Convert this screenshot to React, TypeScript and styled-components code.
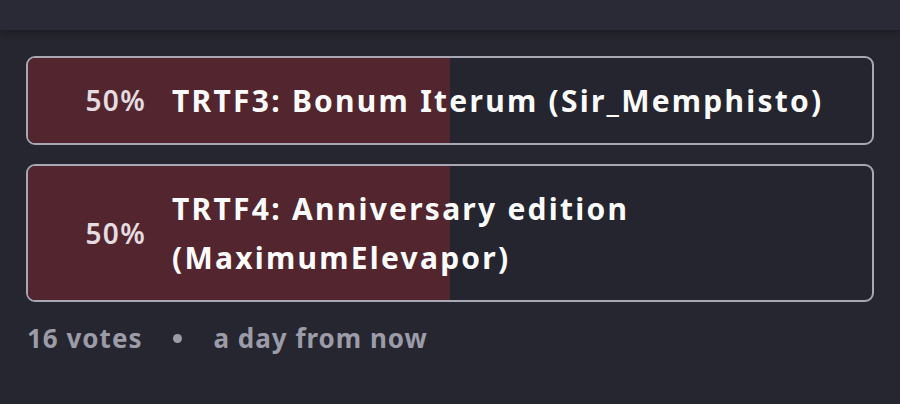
import React from "react";
import styled, { createGlobalStyle } from "styled-components";

const Global = createGlobalStyle`
  html, body { margin: 0; padding: 0; background: #262630; }
  body { font-family: "Noto Sans", "Open Sans", sans-serif; }
  #root { width: 900px; height: 404px; overflow: hidden; }
`;

const Page = styled.div`
  width: 900px;
  height: 404px;
  background: #262630;
  display: flex;
  flex-direction: column;
`;

const TopBar = styled.div`
  height: 30px;
  background: #292a35;
  box-shadow: 0 2px 8px rgba(0, 0, 0, 0.35);
  flex-shrink: 0;
`;

const Poll = styled.div`
  display: flex;
  flex-direction: column;
  gap: 19px;
  padding: 26px 26px 0 26px;
`;

const Option = styled.div`
  position: relative;
  border: 2px solid #a8a8b4;
  border-radius: 9px;
  background: #252530;
  overflow: hidden;
  display: flex;
  align-items: center;
  padding: 18px 24px 18px 52px;
`;

const Fill = styled.div`
  position: absolute;
  left: 0;
  top: 0;
  bottom: 0;
  background: #53262f;
`;

const Percent = styled.span`
  position: relative;
  width: 66px;
  flex-shrink: 0;
  margin-right: 26px;
  text-align: right;
  color: #e4dce0;
  font-size: 28px;
  font-weight: 600;
  letter-spacing: 1.3px;
  line-height: 49px;
`;

const Title = styled.span`
  position: relative;
  color: #fbfbfb;
  font-size: 30px;
  font-weight: 700;
  letter-spacing: 2.25px;
  line-height: 49px;
`;

const Meta = styled.div`
  display: flex;
  align-items: center;
  gap: 31px;
  padding: 17px 27px 0;
  color: #9c9ca9;
  font-size: 26px;
  font-weight: 700;
  letter-spacing: 1px;
  line-height: 38px;
`;

const Dot = styled.span`
  width: 9px;
  height: 9px;
  border-radius: 50%;
  background: #9c9ca9;
`;

const options = [
  { pct: 50, title: "TRTF3: Bonum Iterum (Sir_Memphisto)" },
  { pct: 50, title: "TRTF4: Anniversary edition (MaximumElevapor)" },
];

export default function App() {
  return (
    <Page>
      <Global />
      <TopBar />
      <Poll>
        {options.map((o, i) => (
          <Option key={i}>
            <Fill style={{ width: `${o.pct}%` }} />
            <Percent>{o.pct}%</Percent>
            <Title>{o.title}</Title>
          </Option>
        ))}
      </Poll>
      <Meta>
        <span>16 votes</span>
        <Dot />
        <span>a day from now</span>
      </Meta>
    </Page>
  );
}
